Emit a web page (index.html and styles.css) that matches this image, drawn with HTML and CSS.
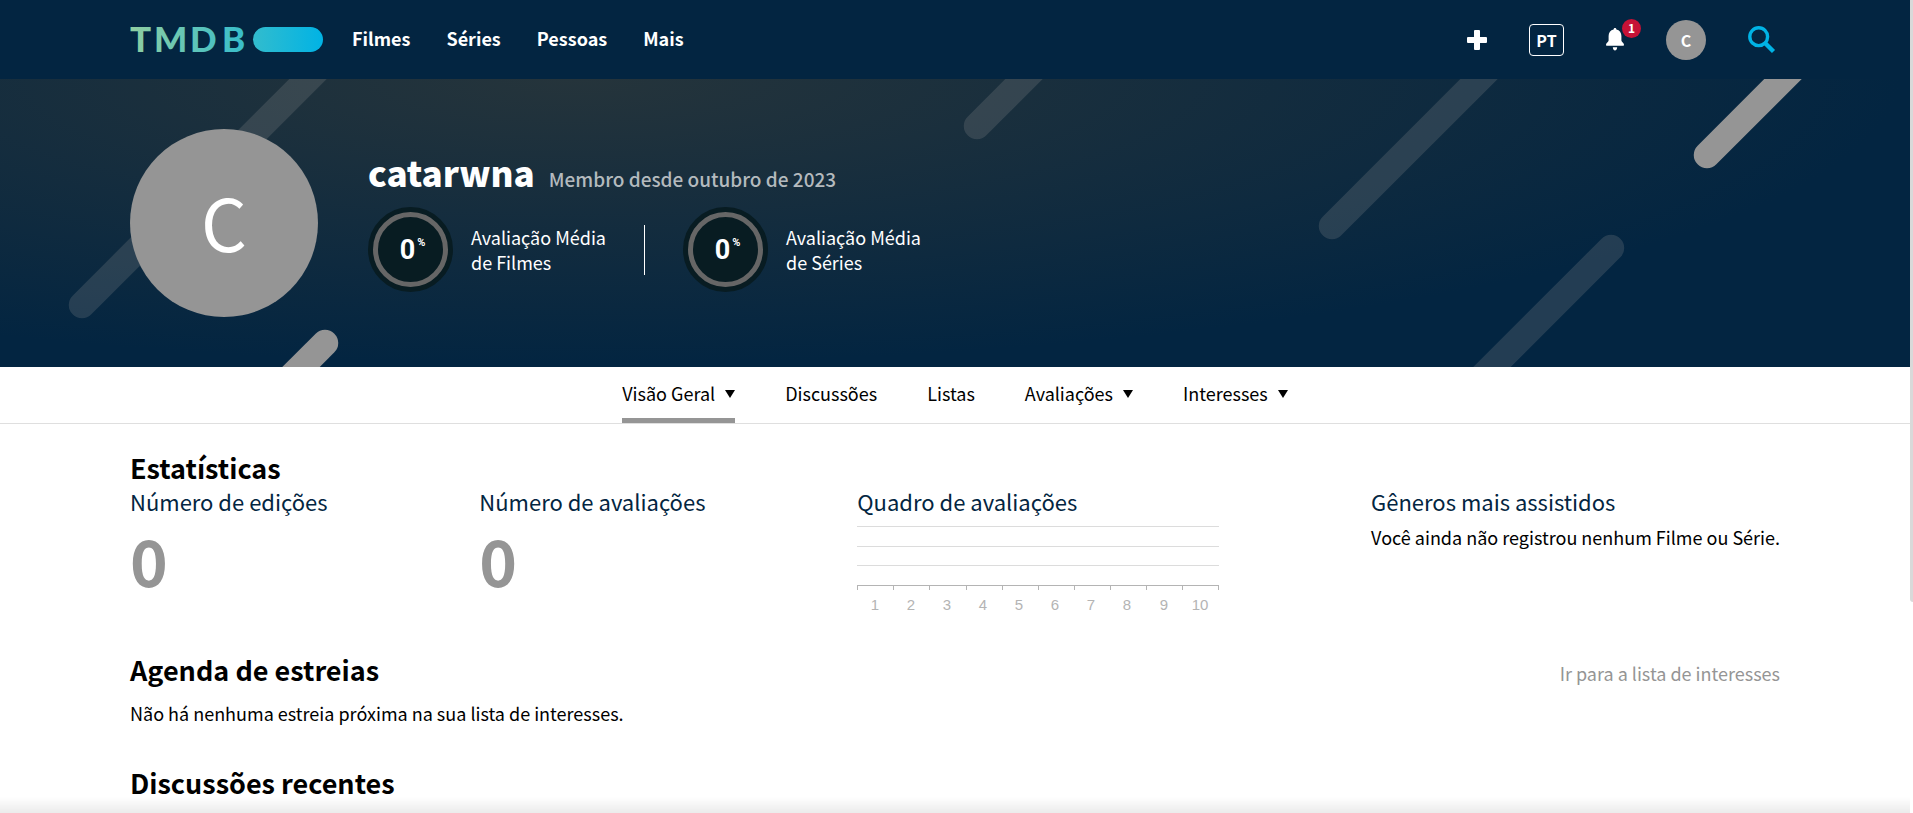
FILE: index.html
```html
<!DOCTYPE html>
<html lang="pt">
<head>
<meta charset="utf-8">
<meta name="viewport" content="width=device-width, initial-scale=1">
<title>catarwna — TMDB</title>
<link rel="stylesheet" href="styles.css">
</head>
<body>
<header class="topbar">
  <div class="wrap topbar-inner">
    <a class="logo" href="#" aria-label="TMDB">
      <svg width="194" height="48" viewBox="0 -11 194 48">
        <defs>
          <linearGradient id="brand" gradientUnits="userSpaceOnUse" x1="0" y1="0" x2="194" y2="0">
            <stop offset="0" stop-color="#90cea1"/>
            <stop offset=".56" stop-color="#3cbec9"/>
            <stop offset="1" stop-color="#00b3e5"/>
          </linearGradient>
        </defs>
        <text class="logo-text" x="0 24 60 92" y="25" fill="url(#brand)">TMDB</text>
        <rect x="123" y="0" width="70" height="25" rx="12.5" fill="url(#brand)"/>
      </svg>
    </a>
    <nav class="main-nav">
      <a href="#">Filmes</a>
      <a href="#">Séries</a>
      <a href="#">Pessoas</a>
      <a href="#">Mais</a>
    </nav>
    <div class="tools">
      <button class="tool" aria-label="Adicionar">
        <svg width="20" height="20" viewBox="0 0 20 20"><path fill="#fff" d="M8 0h4q1 0 1 1v6h6q1 0 1 1v4q0 1-1 1h-6v6q0 1-1 1H8q-1 0-1-1v-6H1q-1 0-1-1V8q0-1 1-1h6V1q0-1 1-1z"/></svg>
      </button>
      <button class="lang">PT</button>
      <button class="tool bell" aria-label="Notificações">
        <svg width="18" height="23" viewBox="0 0 18 23"><path fill="#fff" d="M9 0c.9 0 1.400.6 1.400 1.600C13.600 2.300 15.400 5 15.400 8v4.500c0 1.200 2.600 2.700 2.600 4.200 0 .7-.4 1-1 1H1c-.6 0-1-.3-1-1 0-1.500 2.600-3 2.600-4.200V8c0-3 1.800-5.700 5-6.400C7.600.6 8.100 0 9 0zM6.800 19.300h4.400C11 21.500 10 22.500 9 22.500s-2-1-2.200-3.200z"/></svg>
        <span class="badge">1</span>
      </button>
      <button class="user">C</button>
      <button class="tool" aria-label="Buscar">
        <svg width="28" height="28" viewBox="0 0 28 28"><g fill="none" stroke="#00b3e5"><circle cx="10.700" cy="10.700" r="8.900" stroke-width="3.400"/><path stroke-width="4.400" d="M16.500 16.500l9 9"/></g></svg>
      </button>
    </div>
  </div>
</header>

<section class="hero">
  <svg class="stripes" viewBox="0 0 1913 288" preserveAspectRatio="xMidYMid slice" aria-hidden="true">
    <g stroke="#959595" stroke-width="26.500" stroke-linecap="round">
      <g stroke-opacity=".22">
        <path d="M82 226L348-40"/>
        <path d="M977 47L1064-40"/>
        <path d="M1332 147L1519-40"/>
        <path d="M1611 169L1452 328"/>
      </g>
      <path d="M325 264L261 328"/>
      <path d="M1707 76L1823-40"/>
    </g>
  </svg>
  <div class="wrap hero-inner">
    <div class="avatar">C</div>
    <div class="profile">
      <div class="title">
        <h1>catarwna</h1>
        <p>Membro desde outubro de 2023</p>
      </div>
      <div class="scores">
        <div class="score">
          <div class="ring"><span class="ring-value">0<sup>%</sup></span></div>
          <p>Avaliação Média<br>de Filmes</p>
        </div>
        <div class="score">
          <div class="ring"><span class="ring-value">0<sup>%</sup></span></div>
          <p>Avaliação Média<br>de Séries</p>
        </div>
      </div>
    </div>
  </div>
</section>

<nav class="tabs">
  <a class="active" href="#">Visão Geral<i class="caret"></i></a>
  <a href="#">Discussões</a>
  <a href="#">Listas</a>
  <a href="#">Avaliações<i class="caret"></i></a>
  <a href="#">Interesses<i class="caret"></i></a>
</nav>

<main class="wrap content">
  <section>
    <h2>Estatísticas</h2>
    <div class="stats">
      <div>
        <h3>Número de edições</h3>
        <p class="number">0</p>
      </div>
      <div>
        <h3>Número de avaliações</h3>
        <p class="number">0</p>
      </div>
      <div>
        <h3>Quadro de avaliações</h3>
        <svg class="chart" width="362" height="100" viewBox="0 0 362 100">
          <g fill="none" shape-rendering="crispEdges">
            <path stroke="#dcdcdc" d="M0 9.500h362M0 29.500h362M0 48.500h362"/>
            <path stroke="#b4b4b4" d="M0 68.500h362M.5 68v5M36.500 68v5M72.500 68v5M109.500 68v5M145.500 68v5M181.500 68v5M217.500 68v5M253.500 68v5M289.500 68v5M325.500 68v5M361.500 68v5"/>
          </g>
          <g class="chart-labels">
            <text x="18" y="93">1</text><text x="54" y="93">2</text><text x="90" y="93">3</text><text x="126" y="93">4</text><text x="162" y="93">5</text><text x="198" y="93">6</text><text x="234" y="93">7</text><text x="270" y="93">8</text><text x="307" y="93">9</text><text x="343" y="93">10</text>
          </g>
        </svg>
      </div>
      <div>
        <h3>Gêneros mais assistidos</h3>
        <p class="note">Você ainda não registrou nenhum Filme ou Série.</p>
      </div>
    </div>
  </section>
  <section class="agenda">
    <div class="section-head">
      <h2>Agenda de estreias</h2>
      <a href="#">Ir para a lista de interesses</a>
    </div>
    <p>Não há nenhuma estreia próxima na sua lista de interesses.</p>
  </section>
  <section class="recent">
    <h2>Discussões recentes</h2>
  </section>
</main>
<div class="bottom-shade"></div>
<div class="scroll-thumb"></div>
</body>
</html>
```

FILE: styles.css
```css
*, *::before { box-sizing: border-box; }

body {
  margin: 0;
  padding-right: 3px;
  background: #fff;
  color: #000;
  font: 18px/28px "Noto Sans CJK SC", "Noto Sans", sans-serif;
}

h1, h2, h3, p { margin: 0; }
a { color: inherit; text-decoration: none; }
button {
  padding: 0;
  border: 0;
  background: none;
  color: #fff;
  font: inherit;
  font-weight: 700;
  cursor: pointer;
}
svg { display: block; }

.wrap {
  max-width: 1750px;
  margin: 0 auto;
  padding: 0 50px;
}

.topbar {
  margin-right: -3px;
  padding-right: 3px;
  background: #032541;
  color: #fff;
}
.topbar-inner {
  display: flex;
  align-items: center;
  height: 79px;
}
.logo-text {
  font: 900 35px Lato, sans-serif;
}
.main-nav {
  display: flex;
  gap: 36px;
  margin-left: 28px;
  padding-bottom: 3px;
  font-weight: 700;
}
.tools {
  display: flex;
  align-items: center;
  gap: 42px;
  margin-left: auto;
  padding-right: 4px;
}
.lang {
  width: 35px;
  height: 32px;
  border: 1px solid #fff;
  border-radius: 4px;
  font-size: 16px;
  line-height: 28px;
}
.bell { position: relative; }
.badge {
  position: absolute;
  top: -9px;
  right: -17px;
  width: 19px;
  height: 19px;
  border-radius: 50%;
  background: #c61236;
  font-size: 12px;
  line-height: 18px;
  text-align: center;
}
.user {
  width: 40px;
  height: 40px;
  border-radius: 50%;
  background: #959595;
  font-size: 16px;
}

.hero {
  position: relative;
  margin-right: -3px;
  padding-right: 3px;
  overflow: hidden;
  background: #032541 radial-gradient(at 30% top, #25343b 0%, #032541 70%);
  color: #fff;
}
.stripes {
  position: absolute;
  top: 0;
  left: 0;
  width: 100%;
  height: 100%;
}
.hero-inner {
  position: relative;
  display: flex;
  align-items: center;
  gap: 50px;
  padding-top: 50px;
  padding-bottom: 50px;
}
.avatar {
  width: 188px;
  height: 188px;
  border-radius: 50%;
  background: #959595;
  font-size: 72px;
  line-height: 184px;
  text-align: center;
}
.title {
  display: flex;
  align-items: baseline;
  gap: 14px;
}
.title h1 {
  font-size: 35px;
  line-height: 44px;
  font-weight: 900;
}
.title p {
  color: #b4babe;
  font-size: 19px;
  font-weight: 500;
}
.scores {
  display: flex;
  align-items: center;
  margin-top: 13px;
  margin-bottom: 4px;
}
.score {
  display: flex;
  align-items: center;
  gap: 18px;
  line-height: 25px;
}
.score + .score::before {
  content: "";
  width: 1px;
  height: 50px;
  margin: 0 20px 0 38px;
  background: #fff;
}
.ring {
  display: grid;
  place-items: center;
  width: 85px;
  height: 85px;
  border: 5px solid #081c22;
  border-radius: 50%;
  background: #081c22;
}
.ring::before {
  content: "";
  grid-area: 1 / 1;
  width: 75px;
  height: 75px;
  border: 5px solid #666;
  border-radius: 50%;
}
.ring-value {
  display: flex;
  grid-area: 1 / 1;
  gap: 2px;
  padding-left: 4px;
  font: 700 27px/30px Roboto, sans-serif;
}
.ring-value sup {
  font-size: 11px;
  line-height: 16px;
}

.tabs {
  display: flex;
  justify-content: center;
  gap: 50px;
  border-bottom: 1px solid #dfdfdf;
}
.tabs a {
  display: flex;
  align-items: center;
  gap: 10px;
  padding-top: 2px;
  border-bottom: 5px solid transparent;
  line-height: 49px;
}
.tabs .active { border-color: #959595; }
.caret {
  border: 5px solid transparent;
  border-top: 8px solid #000;
  border-bottom: 0;
}

.content { padding-top: 26px; }
h2 {
  font-size: 27px;
  line-height: 36px;
}
h3 {
  margin-bottom: 1px;
  color: #032541;
  font-size: 22px;
  line-height: 30px;
  font-weight: 400;
}
.stats {
  display: flex;
  justify-content: space-between;
}
.number {
  margin-top: 7px;
  color: #959595;
  font-size: 64px;
  line-height: 72px;
  font-weight: 700;
}
.note { margin-top: 7px; }
.chart-labels {
  fill: #b4b4b4;
  font: 15px "Liberation Sans", Arial, sans-serif;
  text-anchor: middle;
}
.agenda { margin-top: 35px; }
.section-head {
  display: flex;
  align-items: baseline;
  justify-content: space-between;
  margin-bottom: 11px;
}
.section-head a { color: #959595; }
.recent { margin-top: 38px; }

.bottom-shade {
  position: fixed;
  right: 3px;
  bottom: 0;
  left: 0;
  height: 16px;
  background: linear-gradient(transparent, rgba(0, 0, 0, .08));
}
.scroll-thumb {
  position: fixed;
  top: 0;
  right: 0;
  width: 3px;
  height: 74%;
  border-bottom-left-radius: 3px;
  background: #d9d9d9;
}
```
